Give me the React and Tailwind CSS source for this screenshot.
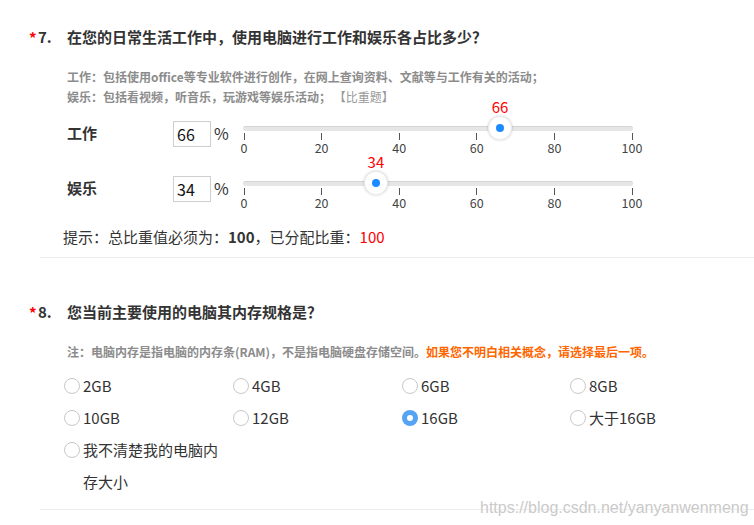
import React from "react";

const TICKS = [0, 20, 40, 60, 80, 100];

function Slider({ value }) {
  const pos = (v) => 1 + (v / 100) * 388;
  return (
    <div className="relative w-[390px] h-[26px]">
      <div className="absolute left-0 right-0 top-[5px] h-[5px] rounded-full bg-[#e6e6e6] border-t border-[#d4d4d4]" />
      {TICKS.map((t) => (
        <React.Fragment key={t}>
          <div className="absolute top-[12px] w-px h-[7px] bg-[#555]" style={{ left: pos(t) - 0.5 }} />
          <div
            className="absolute top-[19px] w-[40px] text-center text-[12.5px] leading-[15px] text-[#444]"
            style={{ left: pos(t) - 20 }}
          >
            {t}
          </div>
        </React.Fragment>
      ))}
      <div
        className="absolute top-[-22px] w-[40px] text-center text-[15px] leading-[16px] text-[#ff0000]"
        style={{ left: pos(value) - 20 }}
      >
        {value}
      </div>
      <div
        className="absolute top-[-5px] w-[24px] h-[24px] rounded-full bg-white border border-[#ececec] shadow-[0_0_3px_rgba(0,0,0,0.2)] flex items-center justify-center"
        style={{ left: pos(value) - 12 }}
      >
        <div className="w-[8px] h-[8px] rounded-full bg-[#1a8cff]" />
      </div>
    </div>
  );
}

function SliderRow({ label, value, className }) {
  return (
    <div className={"flex items-start h-[26px] pl-[67px] " + className}>
      <div className="w-[106px] leading-[23px] text-[15px] font-bold text-[#333]">{label}</div>
      <div className="w-[38px] h-[26px] border border-[#cfcfcf] pl-[3px] text-[16px] leading-[24px] text-[#111]">
        {value}
      </div>
      <div className="w-[32px] pl-[3px] text-[16px] leading-[24px] text-[#333]">%</div>
      <Slider value={value} />
    </div>
  );
}

function Radio({ label, checked }) {
  return (
    <div className="flex items-start">
      {checked ? (
        <div className="mt-[8px] w-[16px] h-[16px] shrink-0 rounded-full bg-[#57a3f3] flex items-center justify-center">
          <div className="w-[6px] h-[6px] rounded-full bg-white" />
        </div>
      ) : (
        <div className="mt-[8px] w-[16px] h-[16px] shrink-0 rounded-full border border-[#c8c8c8] bg-white" />
      )}
      <div className="ml-[3px] max-w-[140px] text-[15px] leading-[32px] text-[#333]">{label}</div>
    </div>
  );
}

function Title({ num, text }) {
  return (
    <div className="flex items-start h-[24px] leading-[24px] pl-[29px]">
      <span className="w-[9px] text-[15px] font-bold text-[#ff0000] relative top-[1px]">*</span>
      <span className="w-[29px] text-[15px] font-bold text-[#333]">{num}.</span>
      <span className="text-[15px] font-bold text-[#333]">{text}</span>
    </div>
  );
}

export default function App() {
  const opts = ["2GB", "4GB", "6GB", "8GB", "10GB", "12GB", "16GB", "大于16GB", "我不清楚我的电脑内存大小"];
  return (
    <div className="relative w-[754px] h-[525px] bg-white overflow-hidden font-['Noto_Sans_CJK_SC','Noto_Sans',sans-serif] text-[#333]">
      <div className="pt-[25px]">
        <Title num="7" text="在您的日常生活工作中，使用电脑进行工作和娱乐各占比多少？" />
        <div className="ml-[67px] mt-[18px] text-[12px] leading-[20px] font-bold text-[#8c8c8c]">
          <div>工作：包括使用office等专业软件进行创作，在网上查询资料、文献等与工作有关的活动；</div>
          <div>
            娱乐：包括看视频，听音乐，玩游戏等娱乐活动；
            <span className="font-normal text-[#999]"> 【比重题】</span>
          </div>
        </div>
        <SliderRow label="工作" value={66} className="mt-[14px]" />
        <SliderRow label="娱乐" value={34} className="mt-[29px]" />
        <div className="mt-[25px] pl-[63px] text-[15px] leading-[20px] text-[#333]">
          提示：总比重值必须为：<span className="font-bold">100</span>，已分配比重：
          <span className="text-[#ff0000]">100</span>
        </div>
        <div className="mt-[10px] ml-[40px] h-px bg-[#ececec]" />

        <div className="mt-[42px]">
          <Title num="8" text="您当前主要使用的电脑其内存规格是？" />
        </div>
        <div className="ml-[67px] mt-[18px] text-[12px] leading-[20px] font-bold text-[#8c8c8c]">
          注：电脑内存是指电脑的内存条(RAM)，不是指电脑硬盘存储空间。
          <span className="text-[#ff6600]">如果您不明白相关概念，请选择最后一项。</span>
        </div>
        <div className="mt-[8px] pl-[64px] grid grid-cols-[169px_169px_168px_169px]">
          {opts.map((o) => (
            <Radio key={o} label={o} checked={o === "16GB"} />
          ))}
        </div>
        <div className="mt-[11px] ml-[40px] h-px bg-[#ececec]" />
      </div>
      <div className="absolute left-[480px] top-[499px] text-[16px] leading-[18px] font-['Liberation_Sans',sans-serif] text-[#cacaca] [text-shadow:0_0_2px_white]">
        https://blog.csdn.net/yanyanwenmeng
      </div>
    </div>
  );
}
